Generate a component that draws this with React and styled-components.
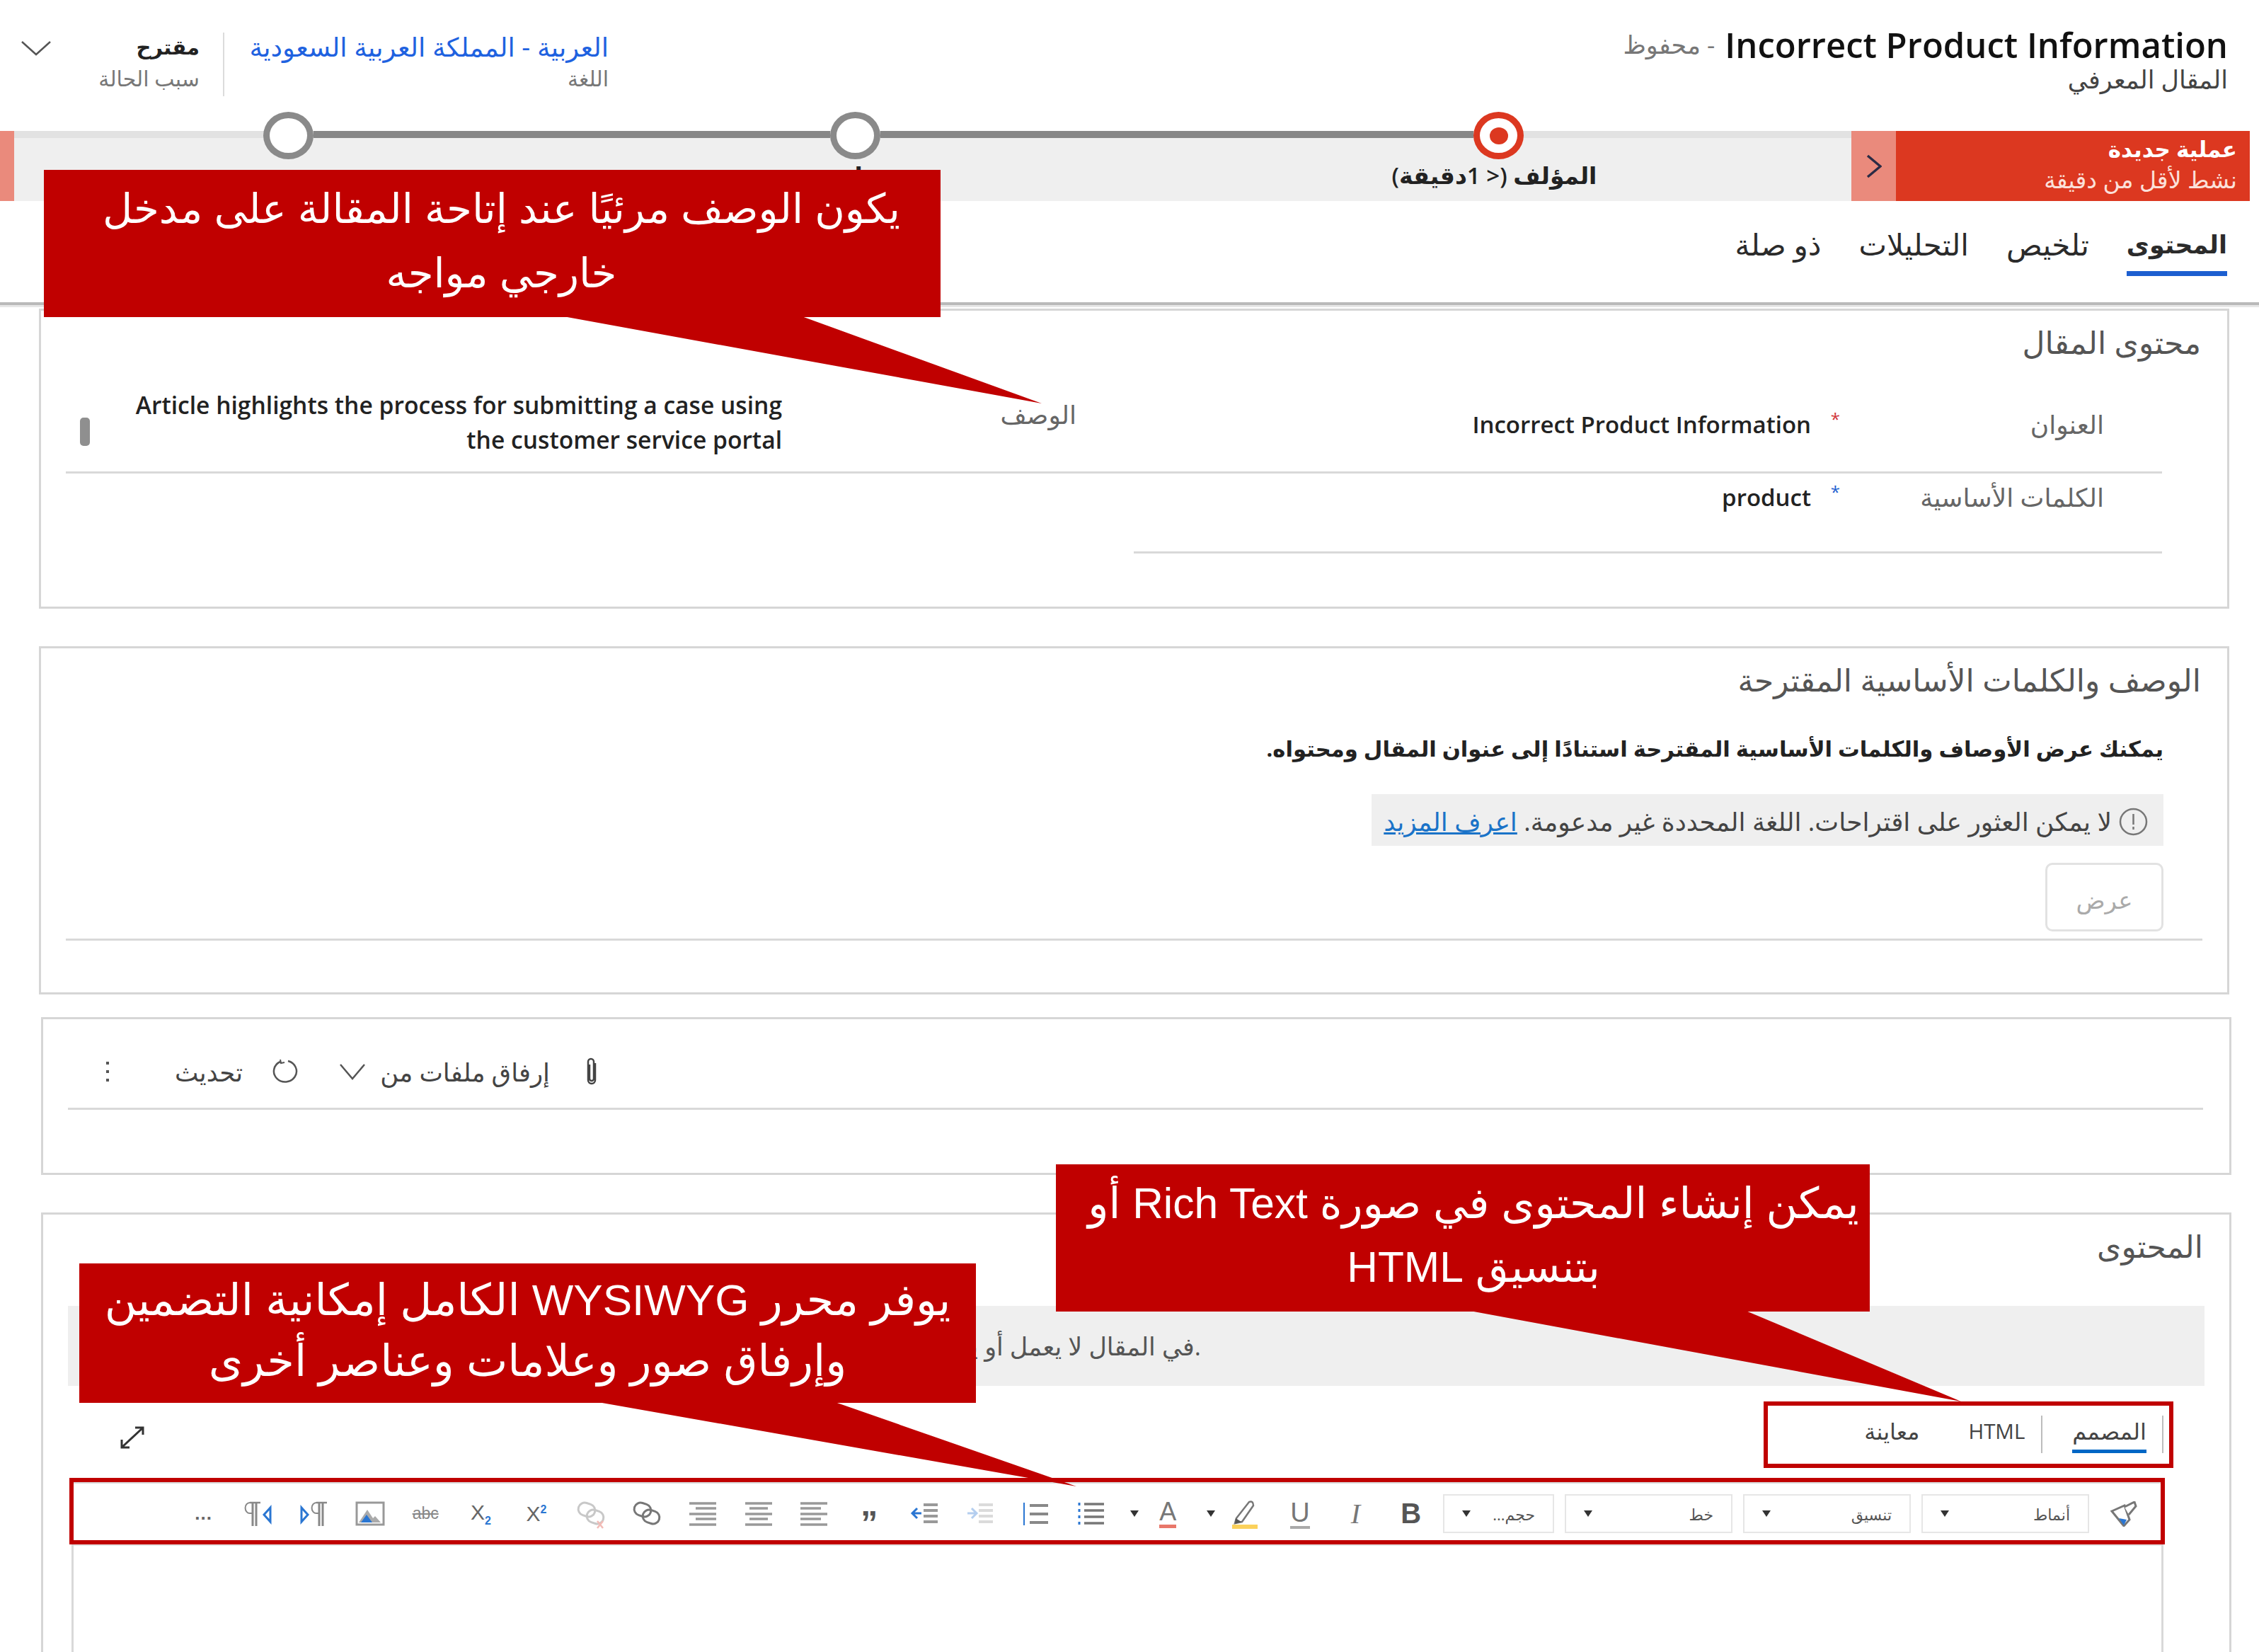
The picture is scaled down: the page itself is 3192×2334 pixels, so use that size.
import React from 'react'
import styled, { createGlobalStyle } from 'styled-components'

const UI_FONT = `"Open Sans", "DejaVu Sans", sans-serif`
const CALLOUT_FONT = `"Liberation Sans", "DejaVu Sans", sans-serif`

const GlobalStyle = createGlobalStyle`
  html, body {
    margin: 0;
    padding: 0;
    background: #fff;
  }
  body {
    width: 3192px;
    height: 2334px;
    overflow: hidden;
    font-family: ${UI_FONT};
    color: #1f1f1f;
  }
`

const Page = styled.div`
  position: relative;
  width: 3192px;
  height: 2334px;
  overflow: hidden;
`

/* header */
const Header = styled.header`
  height: 185px;
  box-sizing: border-box;
  display: flex;
  justify-content: space-between;
  padding: 36px 44px 0 30px;
`

const TitleBlock = styled.div`
  display: flex;
  flex-direction: column;
`

const TitleLine = styled.div`
  display: flex;
  align-items: center;
  gap: 14px;
  height: 54px;
`

const Title = styled.span`
  font-size: 49px;
  line-height: 54px;
  font-weight: 600;
  color: #111;
`

const SavedNote = styled.span`
  font-size: 35px;
  line-height: 54px;
  color: #777;
`

const EntityName = styled.div`
  font-size: 35px;
  line-height: 44px;
  color: #444;
`

const HeaderMeta = styled.div`
  display: flex;
  align-items: flex-start;
  margin-top: 10px;
`

const MetaField = styled.div`
  display: flex;
  flex-direction: column;
  gap: 6px;
  width: ${p => p.$width}px;
`

const MetaDivider = styled.div`
  width: 2px;
  height: 90px;
  margin: 0 33px;
  background: #dcdcdc;
`

const MetaValue = styled.div`
  font-size: ${p => (p.$strong ? 29 : 37)}px;
  line-height: 40px;
  font-weight: ${p => (p.$strong ? 700 : 400)};
  color: ${p => (p.$link ? '#1f62e0' : '#222')};
  white-space: nowrap;
`

const MetaLabel = styled.div`
  font-size: 30px;
  line-height: 38px;
  color: #777;
`

const HeaderChevron = styled.svg`
  width: 42px;
  height: 22px;
  margin: 11px 50px 0 0;
`

/* business process bar */
const ProcessBar = styled.div`
  height: 99px;
  margin-right: 13px;
  display: flex;
`

const ActiveStage = styled.div`
  width: 500px;
  box-sizing: border-box;
  padding: 4px 18px 0 0;
  background: #dc3820;
  color: #fff;
`

const ActiveTitle = styled.div`
  font-size: 31px;
  line-height: 42px;
  font-weight: 700;
`

const ActiveNote = styled.div`
  font-size: 33px;
  line-height: 46px;
  color: #fbe0da;
`

const BarToggle = styled.div`
  width: 63px;
  display: flex;
  align-items: center;
  justify-content: center;
  background: #ea8a7c;
`

const Track = styled.div`
  flex: 1;
  display: flex;
  align-items: flex-start;
  padding-right: 463px;
  background: linear-gradient(#e2e2e2 10px, #efefef 10px);
`

const StageNode = styled.div`
  position: relative;
  flex: none;
  width: 71px;
  height: 67px;
  margin-top: -27px;
  box-sizing: border-box;
  border-radius: 50%;
  border: 9px solid ${p => (p.$active ? '#dc3820' : '#8a8a8a')};
  background: #fff;
  display: flex;
  align-items: center;
  justify-content: center;
`

const StageDot = styled.div`
  width: 26px;
  height: 24px;
  border-radius: 50%;
  background: #dc3820;
`

const StageLabel = styled.div`
  position: absolute;
  top: 60px;
  left: 50%;
  transform: translateX(calc(-50% - 6px));
  font-size: 33px;
  line-height: 42px;
  font-weight: 600;
  white-space: nowrap;
  color: #222;
`

const StageLine = styled.div`
  flex: none;
  width: ${p => p.$width}px;
  height: 10px;
  background: #878787;
`

const BarEnd = styled.div`
  width: 20px;
  flex: none;
  background: #ea8a7c;
`

/* tabs */
const TabStrip = styled.nav`
  height: 143px;
  box-sizing: content-box;
  display: flex;
  gap: 53px;
  padding: 0 45px 0 0;
  border-bottom: 4px solid #b9b9b9;
  box-shadow: 0 3px 0 #e6e6e6;
`

const Tab = styled.div`
  height: 106px;
  box-sizing: border-box;
  padding-top: 36px;
  font-size: ${p => (p.$active ? 35 : 42)}px;
  line-height: 50px;
  font-weight: ${p => (p.$active ? 600 : 400)};
  color: #2b2b2b;
  white-space: nowrap;
  border-bottom: 7px solid ${p => (p.$active ? '#1d5fd0' : 'transparent')};
`

/* sections */
const Card = styled.section`
  box-sizing: border-box;
  width: 3095px;
  height: ${p => p.$height}px;
  margin: ${p => p.$top}px ${p => p.$right}px 0 0;
  border: 3px solid #d6d6d6;
`

const CardTitle = styled.h2`
  margin: 0;
  padding: 18px 37px 0 0;
  font-size: 44px;
  line-height: 52px;
  font-weight: 400;
  color: #555;
`

const FormRow = styled.div`
  height: 126px;
  margin: 31px 92px 0 35px;
  display: flex;
  border-bottom: 3px solid #d9d9d9;
`

const KeywordRow = styled.div`
  height: 113px;
  width: 1453px;
  margin-right: 92px;
  box-sizing: border-box;
  display: flex;
  align-items: flex-start;
  padding: 14px 82px 0 0;
  border-bottom: 3px solid #d9d9d9;
`

const TitleField = styled.div`
  width: 1453px;
  flex: none;
  box-sizing: border-box;
  padding: 40px 82px 0 0;
  display: flex;
  align-items: flex-start;
`

const FieldLabel = styled.div`
  width: ${p => p.$width}px;
  flex: none;
  font-size: 36px;
  line-height: 40px;
  color: #666;
`

const RequiredMark = styled.span`
  flex: none;
  width: 41px;
  font-size: 24px;
  line-height: 24px;
  color: ${p => p.$color};
`

const FieldValue = styled.div`
  font-family: ${UI_FONT};
  font-size: 33px;
  line-height: 40px;
  font-weight: 600;
  color: #222;
`

const DescriptionField = styled.div`
  flex: 1;
  display: flex;
  align-items: flex-start;
  padding: 8px 81px 0 20px;
`

const DescriptionLabel = styled(FieldLabel)`
  padding-top: 18px;
`

const DescriptionValue = styled(FieldValue)`
  width: 915px;
  font-size: 33.6px;
  line-height: 49px;
  text-align: right;
`

const ScrollThumb = styled.div`
  width: 14px;
  height: 40px;
  margin: 42px auto 0 0;
  border-radius: 5px;
  background: #8f8f8f;
`

const SuggestHint = styled.div`
  margin: 49px 90px 0 0;
  font-size: 30.7px;
  line-height: 44px;
  font-weight: 700;
  color: #222;
`

const SuggestNotice = styled.div`
  width: 1119px;
  height: 73px;
  margin: 43px 90px 0 0;
  box-sizing: border-box;
  padding: 4px 22px 0 0;
  display: flex;
  align-items: center;
  gap: 10px;
  background: #efefef;
  font-size: 36px;
  color: #444;
`

const InfoIcon = styled.svg`
  width: 41px;
  height: 40px;
  flex: none;
`

const LearnMore = styled.a`
  color: #1a73c8;
  text-decoration: underline;
`

const ViewButton = styled.div`
  width: 167px;
  height: 97px;
  margin: 24px 90px 0 0;
  box-sizing: border-box;
  border: 3px solid #e2e2e2;
  border-radius: 10px;
  display: flex;
  align-items: center;
  justify-content: center;
  padding-top: 6px;
  font-size: 34px;
  color: #aaa;
`

const SuggestRule = styled.div`
  height: 3px;
  margin: 10px 35px 0;
  background: #d9d9d9;
`

const CommandBar = styled.div`
  height: 128px;
  margin: 0 37px 0 35px;
  box-sizing: border-box;
  padding: 22px 0 0 53px;
  display: flex;
  justify-content: flex-end;
  align-items: center;
  border-bottom: 3px solid #d9d9d9;
  font-size: 35.5px;
  color: #444;
`

const CommandIcon = styled.svg`
  flex: none;
  width: ${p => p.$w}px;
  height: ${p => p.$h}px;
  margin: ${p => p.$margin || '0'};
`

const ContentNotice = styled.div`
  height: 113px;
  margin: 59px 35px 0;
  box-sizing: border-box;
  padding-right: 1418px;
  display: flex;
  align-items: center;
  background: #efefef;
  font-size: 35px;
  color: #555;
  white-space: nowrap;
  overflow: hidden;
`

const NoticeText = styled.span`
  direction: ltr;
`

const EditorModes = styled.div`
  height: 135px;
  margin: 0 93px 0 40px;
  display: flex;
  justify-content: space-between;
`

const ModeTabs = styled.div`
  display: flex;
  margin-top: 42px;
  height: 53px;
`

const ModeTab = styled.div`
  box-sizing: border-box;
  height: 53px;
  font-size: ${p => p.$size}px;
  line-height: 44px;
  color: #444;
  margin: ${p => p.$margin};
  border-bottom: 5px solid ${p => (p.$active ? '#0067c5' : 'transparent')};
`

const ModeDivider = styled.div`
  width: 2px;
  height: 53px;
  margin-right: ${p => p.$gap || 0}px;
  background: #bdbdbd;
`

const ExpandIcon = styled.svg`
  width: 36px;
  height: 34px;
  margin: 56px 0 0 68px;
`

const Editor = styled.div`
  height: 400px;
  margin: 0 93px 0 40px;
  border: 3px solid #d9d9d9;
`

const EditorToolbar = styled.div`
  height: 88px;
  box-sizing: border-box;
  display: flex;
  align-items: center;
  padding-right: 33px;
  border-bottom: 3px solid #e3e3e3;
`

const BrushIcon = styled.svg`
  width: 41px;
  height: 36px;
  flex: none;
  margin-left: 28px;
`

const Dropdown = styled.div`
  width: ${p => p.$width}px;
  height: 55px;
  flex: none;
  box-sizing: border-box;
  margin-left: ${p => p.$gap}px;
  padding: 0 25px;
  display: flex;
  align-items: center;
  justify-content: space-between;
  border: 2px solid #e6e6e6;
  font-size: 22px;
  color: #555;
`

const Caret = styled.span`
  width: 0;
  height: 0;
  border-left: 6px solid transparent;
  border-right: 6px solid transparent;
  border-top: 9px solid #333;
`

const ToolCaret = styled(Caret)`
  flex: none;
  margin: 0 2px 0 16px;
`

const Tool = styled.div`
  flex: none;
  width: 78.4px;
  height: 44px;
  display: flex;
  align-items: center;
  justify-content: center;
  font-family: "Liberation Sans", sans-serif;
  color: #666;
`

const ToolSvg = styled.svg`
  width: 44px;
  height: 44px;
`

const BoldGlyph = styled.span`
  font-size: 40px;
  font-weight: 700;
  color: #555;
`

const ItalicGlyph = styled.span`
  font-family: "Liberation Serif", serif;
  font-size: 40px;
  font-style: italic;
  color: #777;
`

const UnderlineGlyph = styled.span`
  font-size: 38px;
  line-height: 38px;
  color: #777;
  border-bottom: 4px solid #aaa;
`

const ColorGlyph = styled.span`
  font-size: 36px;
  line-height: 36px;
  color: #777;
  border-bottom: 5px solid #e8776a;
`

const ScriptGlyph = styled.span`
  font-size: 30px;
  color: #666;
  direction: ltr;
`

const ScriptMark = styled.small`
  font-size: 16px;
  font-weight: 700;
  color: #2a76d2;
  vertical-align: ${p => p.$align};
`

const StrikeGlyph = styled.span`
  font-size: 23px;
  color: #888;
  text-decoration: line-through;
  direction: ltr;
`

const QuoteGlyph = styled.span`
  font-size: 48px;
  line-height: 56px;
  font-weight: 700;
  height: 30px;
  color: #555;
`

const DotsGlyph = styled.span`
  font-size: 26px;
  font-weight: 700;
  letter-spacing: 1px;
  color: #666;
`

/* red annotations that lie over the page */
const RedFrame = styled.div`
  position: absolute;
  box-sizing: border-box;
  border: 6px solid #c00000;
`

const TabsFrame = styled(RedFrame)`
  left: 2492px;
  top: 1980px;
  width: 579px;
  height: 94px;
`

const ToolbarFrame = styled(RedFrame)`
  left: 98px;
  top: 2088px;
  width: 2961px;
  height: 94px;
`

const Callout = styled.div`
  position: absolute;
  box-sizing: border-box;
  display: flex;
  align-items: center;
  justify-content: center;
  background: #c00000;
  color: #fff;
  text-align: center;
  font-family: ${CALLOUT_FONT};
`

const DescriptionCallout = styled(Callout)`
  left: 62px;
  top: 240px;
  width: 1267px;
  height: 208px;
  padding: 0 0 8px 26px;
  font-size: 58px;
  line-height: 91px;
`

const FormatCallout = styled(Callout)`
  left: 1492px;
  top: 1645px;
  width: 1150px;
  height: 208px;
  padding: 0 0 8px 30px;
  font-size: 60.5px;
  line-height: 90px;
`

const EditorCallout = styled(Callout)`
  left: 112px;
  top: 1785px;
  width: 1267px;
  height: 197px;
  padding-bottom: 8px;
  font-size: 62px;
  line-height: 86px;
`

const Pointer = styled.svg`
  position: absolute;
  left: 0;
  top: 0;
  overflow: visible;
  width: 1px;
  height: 1px;
`

const CalloutPoints = ({ points }) => (
  <Pointer>
    <polygon points={points} fill="#c00000" />
  </Pointer>
)

const Lines = ({ rows, color = '#999', width = 3 }) => (
  <>
    {rows.map(([x1, x2, y]) => (
      <line key={y} x1={x1} x2={x2} y1={y} y2={y} stroke={color} strokeWidth={width} />
    ))}
  </>
)

const AlignIcon = ({ rows }) => (
  <ToolSvg viewBox="0 0 44 44">
    <Lines rows={rows} width={3.5} />
  </ToolSvg>
)

const alignLeft = [[3, 41, 7], [3, 32, 14], [3, 41, 22], [3, 32, 29], [3, 41, 37]]
const alignCenter = [[3, 41, 7], [9, 35, 14], [3, 41, 22], [9, 35, 29], [3, 41, 37]]
const alignRight = [[3, 41, 7], [12, 41, 14], [3, 41, 22], [12, 41, 29], [3, 41, 37]]

const IndentIcon = ({ faded, arrowBack }) => (
  <ToolSvg viewBox="0 0 44 44" opacity={faded ? 0.35 : 1}>
    <Lines rows={[[20, 40, 9], [20, 40, 17], [20, 40, 25], [20, 40, 33]]} width={4} color="#999" />
    {arrowBack ? (
      <path d="M17 21H4M11 14l-7 7 7 7" stroke="#2a76d2" strokeWidth="3" fill="none" />
    ) : (
      <path d="M4 21h13M10 14l7 7-7 7" stroke="#2a76d2" strokeWidth="3" fill="none" />
    )}
  </ToolSvg>
)

const NumberedListIcon = () => (
  <ToolSvg viewBox="0 0 44 44">
    <Lines rows={[[14, 40, 10], [14, 40, 22], [14, 40, 34]]} color="#888" width={4} />
    <path d="M6 6v32" stroke="#2a76d2" strokeWidth="2" />
  </ToolSvg>
)

const BulletListIcon = () => (
  <ToolSvg viewBox="0 0 44 44">
    <Lines rows={[[12, 40, 8], [12, 40, 17], [12, 40, 26], [12, 40, 35]]} color="#777" width={3.5} />
    <path d="M5 6v4M5 15v4M5 24v4M5 33v4" stroke="#2a76d2" strokeWidth="3" />
  </ToolSvg>
)

const LinkIcon = ({ broken }) => (
  <ToolSvg viewBox="0 0 44 44" opacity={broken ? 0.4 : 1}>
    <rect x="3" y="7" width="24" height="18" rx="9" fill="none" stroke="#777" strokeWidth="3" transform="rotate(18 15 16)" />
    <rect x="15" y="17" width="24" height="18" rx="9" fill="none" stroke="#777" strokeWidth="3" transform="rotate(18 27 26)" />
    {broken && <path d="M30 32l8 10M38 32l-8 10" stroke="#e0584c" strokeWidth="2.5" />}
  </ToolSvg>
)

const ImageIcon = () => (
  <ToolSvg viewBox="0 0 44 44">
    <rect x="3" y="6" width="38" height="31" fill="#fff" stroke="#999" strokeWidth="3" />
    <path d="M6 34L18 16l8 12 3-3 8 9z" fill="#aaa" />
    <path d="M9 34l8-11 8 11z" fill="#2a76d2" />
  </ToolSvg>
)

const Pilcrow = ({ x }) => (
  <g transform={`translate(${x} 0)`} stroke="#888" fill="none">
    <path d="M18 6H9a6 7 0 0 0 0 15h4" strokeWidth="2" />
    <path d="M13 6v33M18 6v33" strokeWidth="3" />
    <path d="M9 6h15" strokeWidth="2.5" />
  </g>
)

const DirectionIcon = ({ ltr }) => (
  <ToolSvg viewBox="0 0 44 44">
    {ltr ? (
      <>
        <path d="M4 13l9 10-9 10z" fill="none" stroke="#2a76d2" strokeWidth="3" />
        <Pilcrow x={16} />
      </>
    ) : (
      <>
        <Pilcrow x={0} />
        <path d="M38 13l-9 10 9 10z" fill="none" stroke="#2a76d2" strokeWidth="3" />
      </>
    )}
  </ToolSvg>
)

const HighlightIcon = () => (
  <ToolSvg viewBox="0 0 44 44">
    <path d="M10 28L28 5q6-2 6 5L18 33l-10 2z" fill="#fff" stroke="#777" strokeWidth="2.5" />
    <path d="M9 28l8 5-9 3z" fill="#555" />
    <rect x="4" y="37" width="36" height="6" fill="#fbd15b" />
  </ToolSvg>
)

const toolbarTools = [
  <Tool key="b"><BoldGlyph>B</BoldGlyph></Tool>,
  <Tool key="i"><ItalicGlyph>I</ItalicGlyph></Tool>,
  <Tool key="u"><UnderlineGlyph>U</UnderlineGlyph></Tool>,
  <Tool key="hl"><HighlightIcon /></Tool>,
  <ToolCaret key="hl-c" />,
  <Tool key="a"><ColorGlyph>A</ColorGlyph></Tool>,
  <ToolCaret key="a-c" />,
  <Tool key="ul"><BulletListIcon /></Tool>,
  <Tool key="ol"><NumberedListIcon /></Tool>,
  <Tool key="ind"><IndentIcon faded /></Tool>,
  <Tool key="out"><IndentIcon arrowBack /></Tool>,
  <Tool key="q"><QuoteGlyph>”</QuoteGlyph></Tool>,
  <Tool key="al"><AlignIcon rows={alignLeft} /></Tool>,
  <Tool key="ac"><AlignIcon rows={alignCenter} /></Tool>,
  <Tool key="ar"><AlignIcon rows={alignRight} /></Tool>,
  <Tool key="lk"><LinkIcon /></Tool>,
  <Tool key="ul2"><LinkIcon broken /></Tool>,
  <Tool key="sup"><ScriptGlyph>X<ScriptMark $align="super">2</ScriptMark></ScriptGlyph></Tool>,
  <Tool key="sub"><ScriptGlyph>X<ScriptMark $align="sub">2</ScriptMark></ScriptGlyph></Tool>,
  <Tool key="st"><StrikeGlyph>abc</StrikeGlyph></Tool>,
  <Tool key="img"><ImageIcon /></Tool>,
  <Tool key="ltr"><DirectionIcon ltr /></Tool>,
  <Tool key="rtl"><DirectionIcon /></Tool>,
  <Tool key="more"><DotsGlyph>...</DotsGlyph></Tool>,
]

export default function App() {
  return (
    <Page dir="rtl">
      <GlobalStyle />

      <Header>
        <TitleBlock>
          <TitleLine>
            <Title dir="ltr">Incorrect Product Information</Title>
            <SavedNote>- محفوظ</SavedNote>
          </TitleLine>
          <EntityName>المقال المعرفي</EntityName>
        </TitleBlock>
        <HeaderMeta>
          <MetaField $width={510}>
            <MetaValue $link>العربية - المملكة العربية السعودية</MetaValue>
            <MetaLabel>اللغة</MetaLabel>
          </MetaField>
          <MetaDivider />
          <MetaField $width={160}>
            <MetaValue $strong>مقترح</MetaValue>
            <MetaLabel>سبب الحالة</MetaLabel>
          </MetaField>
          <HeaderChevron viewBox="0 0 42 22">
            <path d="M1 2l20 18L41 2" fill="none" stroke="#555" strokeWidth="2.5" />
          </HeaderChevron>
        </HeaderMeta>
      </Header>

      <ProcessBar>
        <ActiveStage>
          <ActiveTitle>عملية جديدة</ActiveTitle>
          <ActiveNote>نشط لأقل من دقيقة</ActiveNote>
        </ActiveStage>
        <BarToggle>
          <svg width="22" height="34" viewBox="0 0 22 34">
            <path d="M2 2l18 15L2 32" fill="none" stroke="#2b2b45" strokeWidth="3.5" />
          </svg>
        </BarToggle>
        <Track>
          <StageNode $active>
            <StageDot />
            <StageLabel>المؤلف (&lt; 1دقيقة)</StageLabel>
          </StageNode>
          <StageLine $width={838} />
          <StageNode>
            <StageLabel>مراجعة</StageLabel>
          </StageNode>
          <StageLine $width={730} />
          <StageNode>
            <StageLabel>نشر</StageLabel>
          </StageNode>
        </Track>
        <BarEnd />
      </ProcessBar>

      <TabStrip>
        <Tab $active>المحتوى</Tab>
        <Tab>تلخيص</Tab>
        <Tab>التحليلات</Tab>
        <Tab>ذو صلة</Tab>
      </TabStrip>

      <Card $top={5} $right={42} $height={424}>
        <CardTitle>محتوى المقال</CardTitle>
        <FormRow>
          <TitleField>
            <FieldLabel $width={373}>العنوان</FieldLabel>
            <RequiredMark $color="#d13438">*</RequiredMark>
            <FieldValue dir="ltr">Incorrect Product Information</FieldValue>
          </TitleField>
          <DescriptionField>
            <DescriptionLabel $width={416}>الوصف</DescriptionLabel>
            <DescriptionValue>
              Article highlights the process for submitting a case using the customer service portal
            </DescriptionValue>
            <ScrollThumb />
          </DescriptionField>
        </FormRow>
        <KeywordRow>
          <FieldLabel $width={373}>الكلمات الأساسية</FieldLabel>
          <RequiredMark $color="#1d5fd0">*</RequiredMark>
          <FieldValue dir="ltr">product</FieldValue>
        </KeywordRow>
      </Card>

      <Card $top={53} $right={42} $height={492}>
        <CardTitle>الوصف والكلمات الأساسية المقترحة</CardTitle>
        <SuggestHint>يمكنك عرض الأوصاف والكلمات الأساسية المقترحة استنادًا إلى عنوان المقال ومحتواه.</SuggestHint>
        <SuggestNotice>
          <InfoIcon viewBox="0 0 41 40">
            <ellipse cx="20.5" cy="20" rx="18.5" ry="18" fill="none" stroke="#777" strokeWidth="2.5" />
            <path d="M20.5 9v15M20.5 27v4" stroke="#777" strokeWidth="2.5" />
          </InfoIcon>
          <span>
            لا يمكن العثور على اقتراحات. اللغة المحددة غير مدعومة. <LearnMore>اعرف المزيد</LearnMore>
          </span>
        </SuggestNotice>
        <ViewButton>عرض</ViewButton>
        <SuggestRule />
      </Card>

      <Card $top={32} $right={39} $height={223}>
        <CommandBar>
          <CommandIcon $w={22} $h={40} viewBox="0 0 22 40" $margin="0 0 0 48px">
            <path
              d="M8 10v20a3 3 0 0 0 6 0V6a4 4 0 0 0-8 0v26a5 5 0 0 0 10 0V8"
              fill="none"
              stroke="#444"
              strokeWidth="2.5"
            />
          </CommandIcon>
          <span>إرفاق ملفات من</span>
          <CommandIcon $w={36} $h={24} viewBox="0 0 36 24" $margin="0 21px 0 58px">
            <path d="M1 2l17 20L35 2" fill="none" stroke="#555" strokeWidth="2.5" />
          </CommandIcon>
          <CommandIcon $w={38} $h={36} viewBox="0 0 38 36" $margin="0 0 0 41px">
            <path d="M23 3a16 15 0 1 1-11 1" fill="none" stroke="#555" strokeWidth="2.5" />
            <path d="M12 1l1 5 5-1" fill="none" stroke="#555" strokeWidth="2" />
          </CommandIcon>
          <span>تحديث</span>
          <CommandIcon $w={6} $h={30} viewBox="0 0 6 30" $margin="0 92px 0 0">
            <path d="M3 1v4M3 13v4M3 25v4" stroke="#555" strokeWidth="4" />
          </CommandIcon>
        </CommandBar>
      </Card>

      <Card $top={53} $right={39} $height={700}>
        <CardTitle>المحتوى</CardTitle>
        <ContentNotice>
          <NoticeText>في المقال لا يعمل أو يتم تحديثه.</NoticeText>
        </ContentNotice>
        <EditorModes>
          <ModeTabs>
            <ModeDivider />
            <ModeTab $active $size={32} $margin="0 22px 0 0">المصمم</ModeTab>
            <ModeDivider $gap={42} />
            <ModeTab dir="ltr" $size={29.5} $margin="0 23px 0 0">HTML</ModeTab>
            <ModeTab $size={32} $margin="0 69px 0 0">معاينة</ModeTab>
          </ModeTabs>
          <ExpandIcon viewBox="0 0 36 34">
            <path d="M4 30L32 4M22 3h11v10M3 20v11h11" fill="none" stroke="#333" strokeWidth="3" />
          </ExpandIcon>
        </EditorModes>
        <Editor>
          <EditorToolbar>
            <BrushIcon viewBox="0 0 41 36">
              <path d="M4 14L22 6l7 20-8 9z" fill="#fff" stroke="#777" strokeWidth="3" />
              <path d="M14 24l11 2-4 8z" fill="#2a76d2" />
              <path d="M22 8L36 1l2 6-10 12" fill="#fff" stroke="#777" strokeWidth="3" />
            </BrushIcon>
            <Dropdown $width={237} $gap={15}>أنماط<Caret /></Dropdown>
            <Dropdown $width={237} $gap={15}>تنسيق<Caret /></Dropdown>
            <Dropdown $width={237} $gap={15}>خط<Caret /></Dropdown>
            <Dropdown $width={157} $gap={6}>حجم...<Caret /></Dropdown>
            {toolbarTools}
          </EditorToolbar>
        </Editor>
      </Card>

      <TabsFrame />
      <ToolbarFrame />

      <CalloutPoints points="796,447 1133,447 1472,570" />
      <DescriptionCallout>
        <span>
          يكون الوصف مرئيًا عند إتاحة المقالة على مدخل
          <br />
          خارجي مواجه
        </span>
      </DescriptionCallout>

      <CalloutPoints points="2077,1852 2467,1852 2771,1980" />
      <FormatCallout>
        <span>
          يمكن إنشاء المحتوى في صورة Rich Text أو
          <br />
          بتنسيق HTML
        </span>
      </FormatCallout>

      <CalloutPoints points="845,1981 1180,1981 1521,2100" />
      <EditorCallout>
        <span>
          يوفر محرر WYSIWYG الكامل إمكانية التضمين
          <br />
          وإرفاق صور وعلامات وعناصر أخرى
        </span>
      </EditorCallout>
    </Page>
  )
}
